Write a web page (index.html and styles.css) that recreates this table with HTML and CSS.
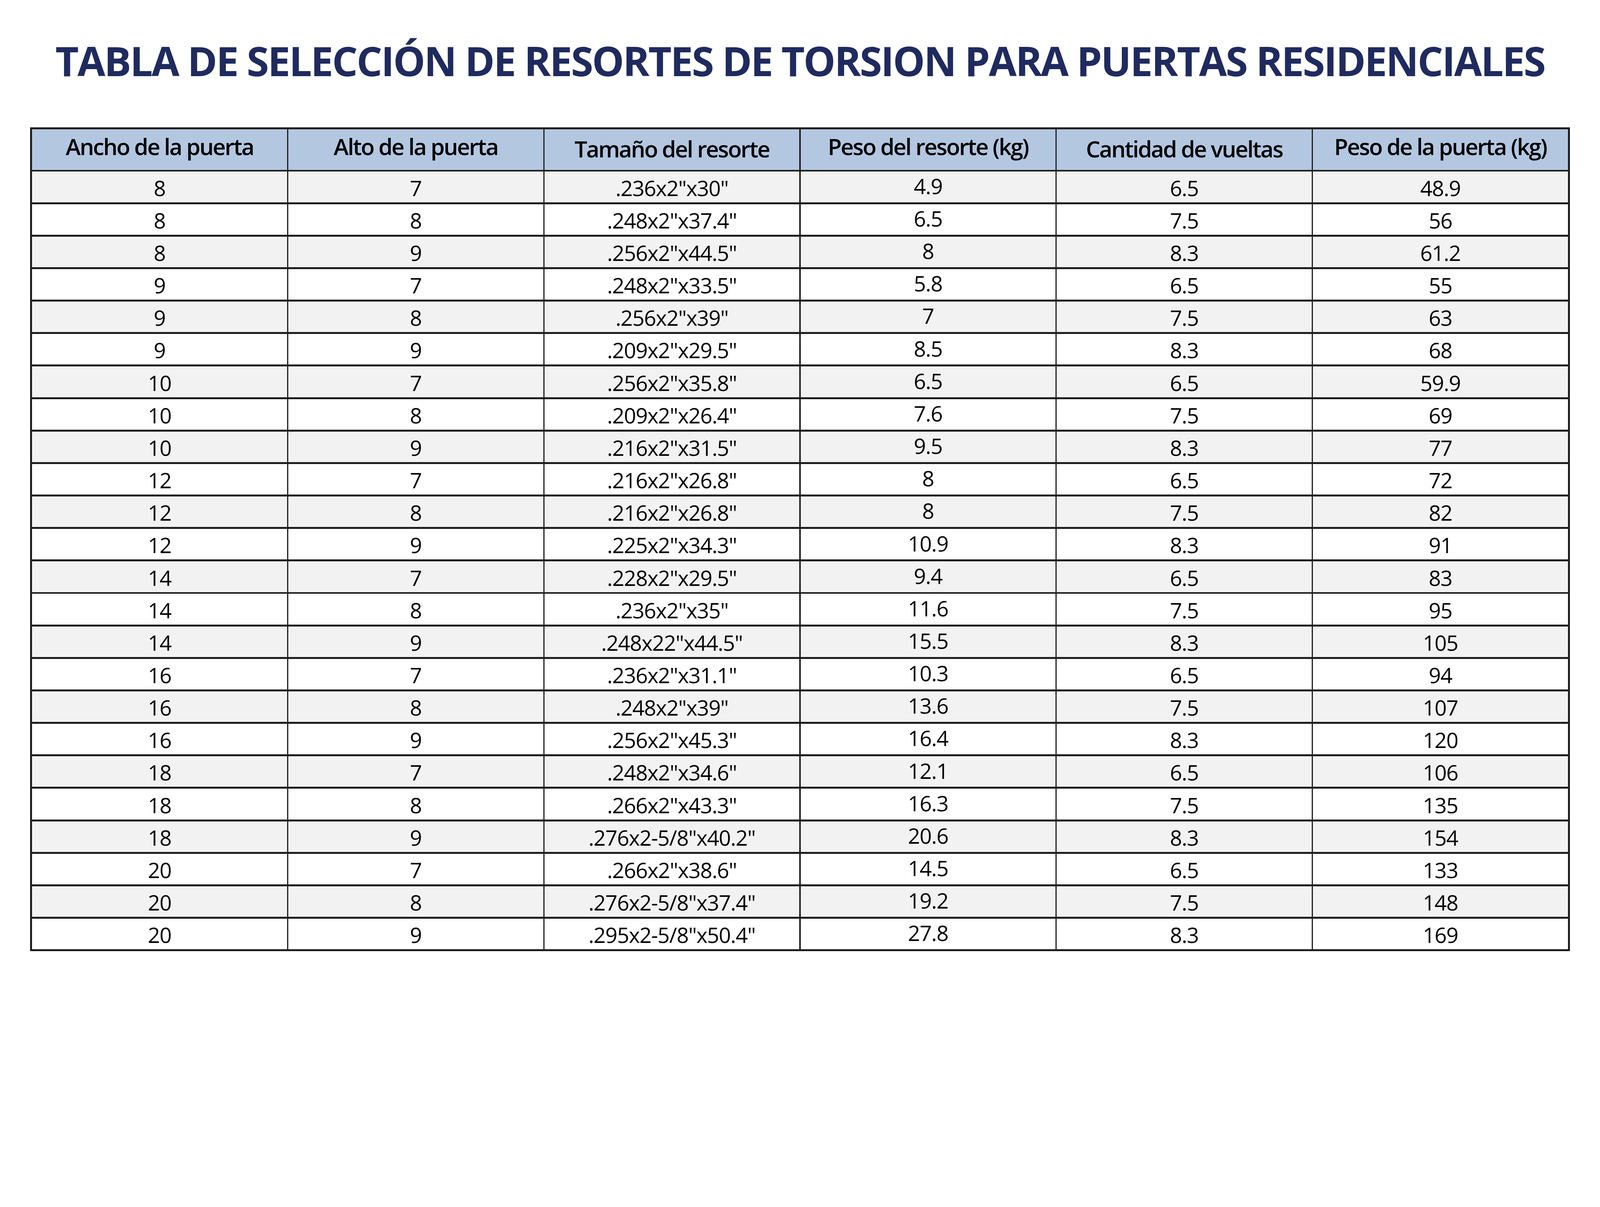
FILE: index.html
```html
<!DOCTYPE html>
<html lang="es">
<head>
<meta charset="utf-8">
<title>Tabla de selección de resortes de torsión</title>
<link rel="stylesheet" href="styles.css">
</head>
<body>
<h1 class="title">TABLA DE SELECCIÓN DE RESORTES DE TORSION PARA PUERTAS RESIDENCIALES</h1>
<div class="table">
  <div class="cell head">Ancho de la puerta</div>
  <div class="cell head">Alto de la puerta</div>
  <div class="cell head low">Tamaño del resorte</div>
  <div class="cell head">Peso del resorte (kg)</div>
  <div class="cell head low">Cantidad de vueltas</div>
  <div class="cell head">Peso de la puerta (kg)</div>
</div>
<script>
const rows = [
  ["8","7",".236x2\"x30\"","4.9","6.5","48.9"],
  ["8","8",".248x2\"x37.4\"","6.5","7.5","56"],
  ["8","9",".256x2\"x44.5\"","8","8.3","61.2"],
  ["9","7",".248x2\"x33.5\"","5.8","6.5","55"],
  ["9","8",".256x2\"x39\"","7","7.5","63"],
  ["9","9",".209x2\"x29.5\"","8.5","8.3","68"],
  ["10","7",".256x2\"x35.8\"","6.5","6.5","59.9"],
  ["10","8",".209x2\"x26.4\"","7.6","7.5","69"],
  ["10","9",".216x2\"x31.5\"","9.5","8.3","77"],
  ["12","7",".216x2\"x26.8\"","8","6.5","72"],
  ["12","8",".216x2\"x26.8\"","8","7.5","82"],
  ["12","9",".225x2\"x34.3\"","10.9","8.3","91"],
  ["14","7",".228x2\"x29.5\"","9.4","6.5","83"],
  ["14","8",".236x2\"x35\"","11.6","7.5","95"],
  ["14","9",".248x22\"x44.5\"","15.5","8.3","105"],
  ["16","7",".236x2\"x31.1\"","10.3","6.5","94"],
  ["16","8",".248x2\"x39\"","13.6","7.5","107"],
  ["16","9",".256x2\"x45.3\"","16.4","8.3","120"],
  ["18","7",".248x2\"x34.6\"","12.1","6.5","106"],
  ["18","8",".266x2\"x43.3\"","16.3","7.5","135"],
  ["18","9",".276x2-5/8\"x40.2\"","20.6","8.3","154"],
  ["20","7",".266x2\"x38.6\"","14.5","6.5","133"],
  ["20","8",".276x2-5/8\"x37.4\"","19.2","7.5","148"],
  ["20","9",".295x2-5/8\"x50.4\"","27.8","8.3","169"]
];
const t = document.querySelector('.table');
rows.forEach((r, i) => {
  r.forEach((v, j) => {
    const d = document.createElement('div');
    d.className = 'cell ' + (i % 2 === 0 ? 'odd' : 'even') + (j === 3 ? ' raised' : '');
    d.textContent = v;
    t.appendChild(d);
  });
});
</script>
</body>
</html>
```

FILE: styles.css
```css
:root {
  /* one unit = one pixel of the 5024px wide design */
  --u: calc(100vw / 5024);
}

html, body {
  margin: 0;
  padding: 0;
  background: #ffffff;
  overflow: hidden;
}

body {
  font-family: "Open Sans", "Liberation Sans", sans-serif;
  color: #000000;
}

.title {
  margin: calc(var(--u) * 126) 0 calc(var(--u) * 147) 0;
  font-family: "Open Sans", "Liberation Sans", sans-serif;
  font-weight: 700;
  font-size: calc(var(--u) * 127);
  line-height: calc(var(--u) * 127);
  height: calc(var(--u) * 127);
  letter-spacing: calc(var(--u) * -4);
  text-align: center;
  color: #1f2a5f;
  white-space: nowrap;
}

.table {
  width: calc(var(--u) * 4834);
  margin: 0 auto;
  box-sizing: border-box;
  padding: calc(var(--u) * 6);
  background: #1e1e1e;
  display: grid;
  grid-template-columns: repeat(6, 1fr);
  grid-template-rows: calc(var(--u) * 127);
  grid-auto-rows: calc(var(--u) * 96);
  column-gap: calc(var(--u) * 4);
  row-gap: calc(var(--u) * 6);
}

.cell {
  box-sizing: border-box;
  text-align: center;
  white-space: nowrap;
  font-size: calc(var(--u) * 67);
  line-height: calc(var(--u) * 67);
  padding-top: calc(var(--u) * 17.5);
  letter-spacing: calc(var(--u) * -1.5);
}

.cell.odd {
  background: #f2f2f2;
}

.cell.even {
  background: #ffffff;
}

.cell.raised {
  padding-top: calc(var(--u) * 11.5);
}

.cell.head {
  background: #b3c7e1;
  font-weight: 600;
  font-size: calc(var(--u) * 71);
  line-height: calc(var(--u) * 71);
  padding-top: calc(var(--u) * 19);
  letter-spacing: calc(var(--u) * -3.2);
}

.cell.head.low {
  padding-top: calc(var(--u) * 26);
}
```
